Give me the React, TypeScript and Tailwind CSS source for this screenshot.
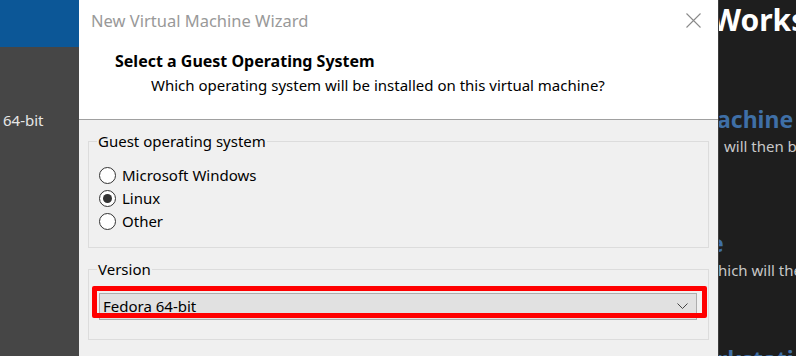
import React from 'react';

const font = { fontFamily: '"Noto Sans", "Open Sans", sans-serif' };

const Radio: React.FC<{ label: string; checked?: boolean }> = ({ label, checked }) => (
  <div className="flex items-center h-[23px]">
    <span className="w-[17px] h-[17px] rounded-full border border-[#333] bg-white flex items-center justify-center">
      {checked && <span className="w-[9px] h-[9px] rounded-full bg-[#333]" />}
    </span>
    <span className="ml-[6px] text-[15px] text-black leading-none">{label}</span>
  </div>
);

export default function App() {
  return (
    <div className="relative flex w-[796px] h-[356px] overflow-hidden" style={font}>
      {/* left app strip */}
      <div className="w-[79px] flex flex-col bg-[#464646]">
        <div className="h-[47px] bg-[#0c5797]" />
        <div className="pt-[62px] pl-[3px] text-[15px] text-[#e6e6e6]">64-bit</div>
      </div>

      {/* wizard dialog */}
      <div className="w-[639px] flex flex-col bg-[#f0f0f0]">
        <div className="h-[120px] bg-white border-b border-[#a0a0a0] relative">
          <div className="pt-[9px] pl-[12px] text-[16.5px] text-[#999]">New Virtual Machine Wizard</div>
          <svg className="absolute left-[607px] top-[13px]" width="15" height="15" viewBox="0 0 15 15">
            <path d="M0.5 0.5 L14.5 14.5 M14.5 0.5 L0.5 14.5" stroke="#8a8a8a" strokeWidth="1.1" />
          </svg>
          <div className="mt-[15px] pl-[36px] text-[16px] font-bold text-black">Select a Guest Operating System</div>
          <div className="mt-[1px] pl-[72px] text-[15px] text-black">
            Which operating system will be installed on this virtual machine?
          </div>
        </div>

        <div className="px-[9px] pt-[10px]">
          <fieldset className="h-[118px] border border-[#dcdcdc] pl-[10px] pr-[10px]">
            <legend className="px-[1px] ml-[-2px] text-[15px] text-black">Guest operating system</legend>
            <div className="mt-[11px] flex flex-col">
              <Radio label="Microsoft Windows" />
              <Radio label="Linux" checked />
              <Radio label="Other" />
            </div>
          </fieldset>

          <fieldset className="mt-[10px] h-[82px] border border-[#dcdcdc] pl-[10px] pr-[11px]">
            <legend className="px-[1px] ml-[-2px] text-[15px] text-black">Version</legend>
            <div className="mt-[12px] h-[27px] bg-[#e1e1e1] border border-[#adadad] flex items-center justify-between pl-[3px] pr-[8px]">
              <span className="text-[15px] text-black">Fedora 64-bit</span>
              <svg width="11" height="6" viewBox="0 0 11 6">
                <path d="M0.5 0.5 L5.5 5.5 L10.5 0.5" stroke="#444" strokeWidth="1" fill="none" />
              </svg>
            </div>
          </fieldset>
        </div>
      </div>

      {/* right app strip */}
      <div className="flex-1 bg-[#1e1e1e] border-l border-[#3c3c3c] overflow-hidden whitespace-nowrap flex flex-col">
        <div className="ml-[-7px] mt-[-2px] text-[30px] font-bold text-white leading-[44px]">Workstation Pro</div>
        <div className="ml-[-2px] mt-[62px] text-[23px] font-bold text-[#3f6fa6] leading-[30px]">achine</div>
        <div className="ml-[5px] mt-[2px] text-[15px] text-[#c8c8c8] leading-[20px]">will then be</div>
        <div className="ml-[-9px] mt-[72px] text-[23px] font-bold text-[#3f6fa6] leading-[30px]">e</div>
        <div className="ml-[-1px] mt-[2px] text-[15px] text-[#c8c8c8] leading-[20px]">hich will then</div>
        <div className="ml-[-2px] mt-[64px] text-[23px] font-bold text-[#3f6fa6] leading-[30px]">rkstation</div>
      </div>

      {/* red highlight */}
      <div className="absolute left-[92px] top-[286px] w-[615px] h-[32px] border-[5px] border-[#ff0000] rounded-[2px]" />
    </div>
  );
}
